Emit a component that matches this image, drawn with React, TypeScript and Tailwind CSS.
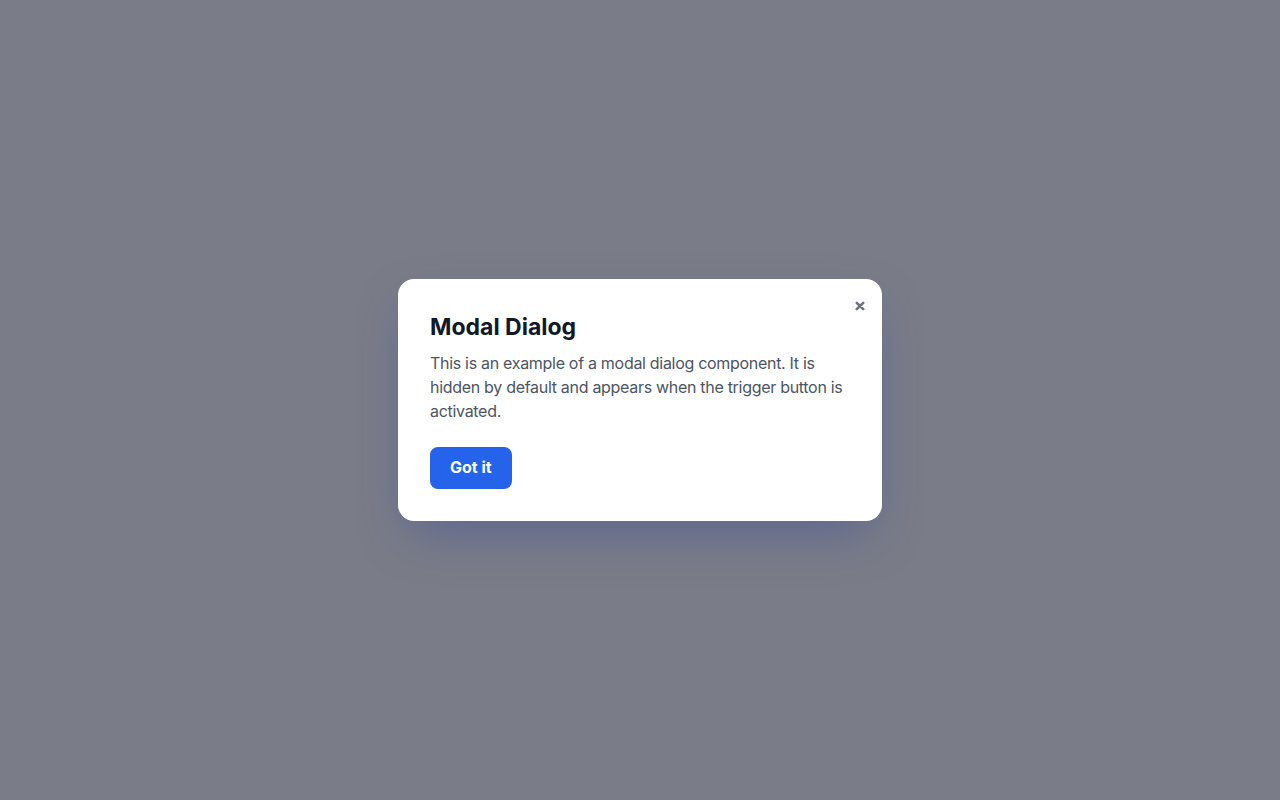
import React from 'react';

const App: React.FC = () => {
  return (
    <div
      className="min-h-screen w-full bg-[#7a7d87] flex items-center justify-center"
      style={{ fontFamily: 'Inter, "Noto Sans", sans-serif' }}
    >
      {/* Modal */}
      <div className="relative w-[484px] bg-white rounded-2xl p-8 shadow-[0_20px_50px_-10px_rgba(59,70,160,0.45)]">
        <button
          aria-label="Close"
          className="absolute top-[22px] right-[17px] w-[10px] h-[10px] flex items-center justify-center text-[#6b7280]"
        >
          <svg width="10" height="10" viewBox="0 0 10 10">
            <path d="M1.8 1.8 L8.2 8.2 M8.2 1.8 L1.8 8.2" stroke="currentColor" strokeWidth="2.6" strokeLinecap="round" />
          </svg>
        </button>

        <h2 className="text-[23px] leading-8 font-bold text-[#111827]">Modal Dialog</h2>
        <p className="mt-2 text-base leading-6 tracking-[-0.3px] text-[#4b5563]">
          This is an example of a modal dialog component. It is hidden by default and appears when the trigger button is activated.
        </p>
        <button className="mt-6 h-[42px] px-5 pb-[2px] rounded-lg bg-[#2563eb] text-white font-bold text-base">
          Got it
        </button>
      </div>
    </div>
  );
};

export default App;
